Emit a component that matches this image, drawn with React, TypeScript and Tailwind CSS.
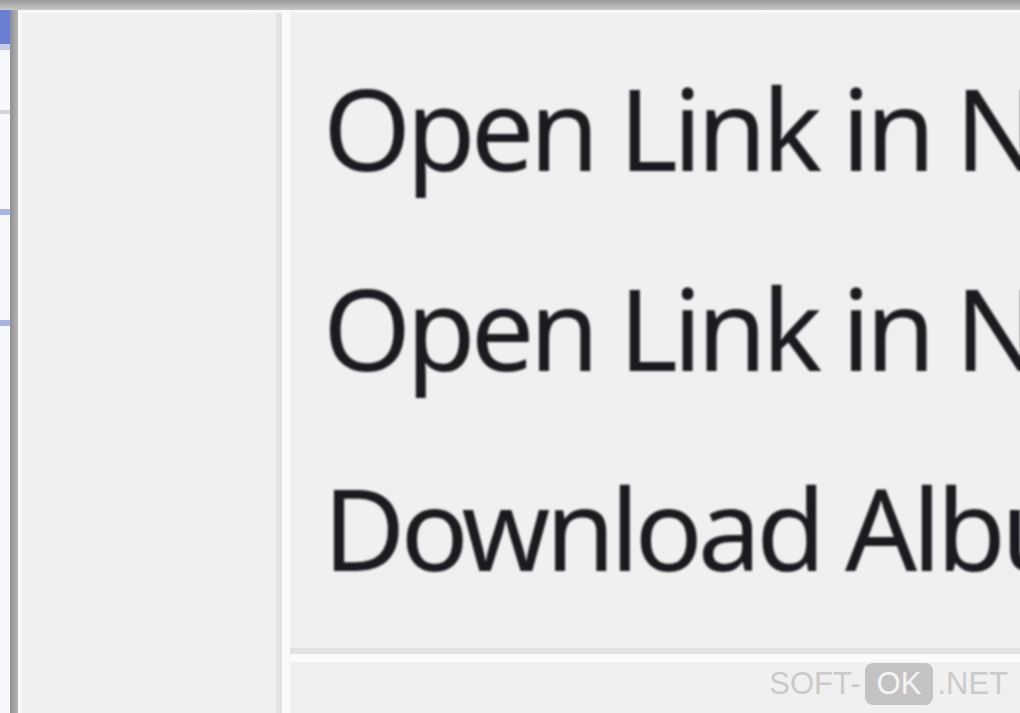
import React from "react";

const items = ["Open Link in New Tab", "Open Link in New Window", "Download Album"];

export default function App() {
  return (
    <div className="relative w-[1020px] h-[713px] overflow-hidden bg-[#f0f0f0] flex flex-col">
      <div className="h-[10px] shrink-0 bg-gradient-to-b from-[#9a9a9a] to-[#c8c8c8]" />
      <div className="flex flex-1 min-h-0">
        <div className="w-[10px] shrink-0 flex flex-col bg-[#f7f8fb]">
          <div className="h-[34px] bg-[#6b7fd2]" />
          <div className="h-[6px] bg-[#c7cde8]" />
          <div className="h-[60px]" />
          <div className="h-[4px] bg-[#d4d4d4]" />
          <div className="h-[95px]" />
          <div className="h-[6px] bg-[#a9b6e0]" />
          <div className="h-[105px]" />
          <div className="h-[6px] bg-[#a9b6e0]" />
        </div>
        <div className="w-[8px] shrink-0 bg-gradient-to-r from-[#8f8f8f] to-[#b5b5b5]" />
        <div className="flex flex-1 min-w-0 bg-[#f0f0f0] border-l-[4px] border-t-[3px] border-[#f7f7f7]">
          <div className="w-[254px] shrink-0" />
          <div className="w-[6px] shrink-0 bg-[#e2e2e2]" />
          <div className="w-[8px] shrink-0 bg-[#fbfbfb]" />
          <div className="flex-1 min-w-0 flex flex-col">
            <div className="pt-[14px] pl-[33px] flex flex-col">
              {items.map((t) => (
                <div
                  key={t}
                  className="h-[200px] leading-[200px] whitespace-nowrap text-[113px] tracking-[-5px] text-[#1c1a1f] [font-family:'Noto_Sans',sans-serif] blur-[0.8px]"
                >
                  {t}
                </div>
              ))}
            </div>
            <div className="mt-[21px] h-[6px] bg-[#e2e2e2]" />
            <div className="h-[8px] bg-[#fbfbfb]" />
          </div>
        </div>
      </div>
      <div className="absolute right-[12px] bottom-[6px] flex items-center gap-[4px] text-[31px] text-[#cacaca] [font-family:'Liberation_Sans',sans-serif]">
        <span>SOFT-</span>
        <span className="bg-[#c3c3c3] text-[#f4f4f4] rounded-[8px] px-[12px] py-[2px] leading-[38px]">OK</span>
        <span>.NET</span>
      </div>
    </div>
  );
}
